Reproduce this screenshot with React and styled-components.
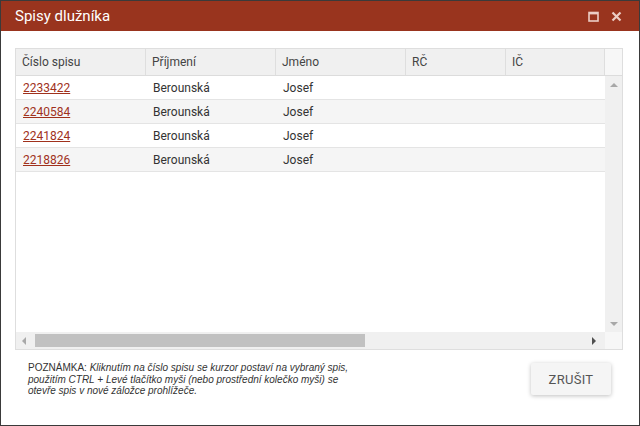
import React from 'react';
import styled, { createGlobalStyle } from 'styled-components';

const GlobalStyle = createGlobalStyle`
  html, body {
    margin: 0;
    padding: 0;
    background: #ffffff;
  }
  * {
    box-sizing: border-box;
  }
`;

const Window = styled.div`
  width: 640px;
  height: 426px;
  border: 1px solid #3a3a3a;
  display: flex;
  flex-direction: column;
  background: #fff;
  font-family: Roboto, "Liberation Sans", Arial, sans-serif;
`;

const TitleBar = styled.div`
  height: 30px;
  flex-shrink: 0;
  background: #99341e;
  display: flex;
  align-items: center;
  justify-content: space-between;
  padding: 0 17px 0 14px;
  color: #fff;
`;

const Title = styled.span`
  font-size: 15px;
`;

const TitleActions = styled.div`
  display: flex;
  align-items: center;
  gap: 12px;
`;

const Body = styled.div`
  flex: 1;
  display: flex;
  flex-direction: column;
  padding: 17px 16px 0 14px;
`;

const Grid = styled.div`
  height: 302px;
  border: 1px solid #dedede;
  display: flex;
  flex-direction: column;
`;

const HeaderRow = styled.div`
  display: flex;
  height: 27px;
  flex-shrink: 0;
  background: #f0f0f0;
  border-bottom: 1px solid #dcdcdc;
`;

const HeaderCell = styled.div`
  width: ${(p) => p.$w}px;
  flex-shrink: 0;
  border-right: 1px solid #dedede;
  padding-left: 6px;
  display: flex;
  align-items: center;
  font-size: 12px;
  color: #444;
`;

const ScrollCorner = styled.div`
  width: 17px;
  flex-shrink: 0;
  background: #f7f7f7;
`;

const Middle = styled.div`
  flex: 1;
  display: flex;
  min-height: 0;
`;

const Rows = styled.div`
  flex: 1;
  overflow: hidden;
`;

const Row = styled.div`
  display: flex;
  height: 24px;
  background: ${(p) => (p.$alt ? '#f5f5f5' : '#ffffff')};
  border-bottom: 1px solid #e4e4e4;
`;

const Cell = styled.div`
  width: ${(p) => p.$w}px;
  flex-shrink: 0;
  padding-left: 7px;
  display: flex;
  align-items: center;
  font-size: 12px;
  color: #333;
`;

const FileLink = styled.a`
  color: #a0311c;
  text-decoration: underline;
  cursor: pointer;
`;

const VScroll = styled.div`
  width: 17px;
  flex-shrink: 0;
  background: #f0f0f0;
  display: flex;
  flex-direction: column;
  justify-content: space-between;
  align-items: center;
  padding: 6px 0 5px;
`;

const HScrollRow = styled.div`
  height: 17px;
  flex-shrink: 0;
  display: flex;
`;

const HScroll = styled.div`
  flex: 1;
  background: #f0f0f0;
  display: flex;
  align-items: center;
  padding: 0 8px 0 5px;
`;

const Thumb = styled.div`
  width: 330px;
  height: 13px;
  background: #c1c1c1;
  margin-left: 8px;
`;

const Spacer = styled.div`
  flex: 1;
`;

const Footer = styled.div`
  display: flex;
  justify-content: space-between;
  align-items: flex-start;
  padding: 12px 12px 0 13px;
`;

const Note = styled.div`
  display: flex;
  flex-direction: column;
  font-family: "Liberation Sans", Arial, sans-serif;
  font-size: 10px;
  line-height: 11.5px;
  color: #333;
  white-space: nowrap;
`;

const Em = styled.span`
  font-style: italic;
`;

const Button = styled.button`
  width: 80px;
  height: 32px;
  margin-top: 1px;
  border: none;
  border-radius: 2px;
  background: #f5f5f5;
  box-shadow: 0 1px 4px rgba(0, 0, 0, 0.25);
  font-family: Roboto, "Liberation Sans", Arial, sans-serif;
  font-size: 13px;
  color: #555;
  letter-spacing: 0.3px;
`;

const Arrow = ({ dir, color }) => {
  const pts = {
    up: '0,5 4,1 8,5',
    down: '0,1 4,5 8,1',
    left: '5,0 1,4 5,8',
    right: '1,0 5,4 1,8',
  }[dir];
  const vertical = dir === 'up' || dir === 'down';
  return (
    <svg width={vertical ? 8 : 6} height={vertical ? 6 : 8} viewBox={vertical ? '0 0 8 6' : '0 0 6 8'}>
      <polygon points={pts} fill={color} />
    </svg>
  );
};

const columns = [
  { key: 'cislo', label: 'Číslo spisu', w: 130 },
  { key: 'prijmeni', label: 'Příjmení', w: 130 },
  { key: 'jmeno', label: 'Jméno', w: 130 },
  { key: 'rc', label: 'RČ', w: 100 },
  { key: 'ic', label: 'IČ', w: 99 },
];

const rows = [
  { cislo: '2233422', prijmeni: 'Berounská', jmeno: 'Josef' },
  { cislo: '2240584', prijmeni: 'Berounská', jmeno: 'Josef' },
  { cislo: '2241824', prijmeni: 'Berounská', jmeno: 'Josef' },
  { cislo: '2218826', prijmeni: 'Berounská', jmeno: 'Josef' },
];

export default function App() {
  return (
    <>
      <GlobalStyle />
      <Window>
        <TitleBar>
          <Title>Spisy dlužníka</Title>
          <TitleActions>
            <svg width="11" height="11" viewBox="0 0 11 11">
              <rect x="1" y="1.5" width="9" height="8.5" fill="none" stroke="#eccdc5" strokeWidth="1.6" />
              <rect x="1" y="1" width="9" height="2.4" fill="#eccdc5" />
            </svg>
            <svg width="11" height="11" viewBox="0 0 11 11">
              <path d="M1.5 1.5 L9.5 9.5 M9.5 1.5 L1.5 9.5" stroke="#eccdc5" strokeWidth="2.2" />
            </svg>
          </TitleActions>
        </TitleBar>
        <Body>
          <Grid>
            <HeaderRow>
              {columns.map((c) => (
                <HeaderCell key={c.key} $w={c.w}>{c.label}</HeaderCell>
              ))}
              <ScrollCorner />
            </HeaderRow>
            <Middle>
              <Rows>
                {rows.map((r, i) => (
                  <Row key={r.cislo} $alt={i % 2 === 1}>
                    {columns.map((c) => (
                      <Cell key={c.key} $w={c.w}>
                        {c.key === 'cislo' ? <FileLink>{r.cislo}</FileLink> : r[c.key]}
                      </Cell>
                    ))}
                  </Row>
                ))}
              </Rows>
              <VScroll>
                <Arrow dir="up" color="#a8a8a8" />
                <Arrow dir="down" color="#a8a8a8" />
              </VScroll>
            </Middle>
            <HScrollRow>
              <HScroll>
                <Arrow dir="left" color="#a8a8a8" />
                <Thumb />
                <Spacer />
                <Arrow dir="right" color="#505050" />
              </HScroll>
              <ScrollCorner />
            </HScrollRow>
          </Grid>
          <Footer>
            <Note>
              <span>POZNÁMKA: <Em>Kliknutím na číslo spisu se kurzor postaví na vybraný spis,</Em></span>
              <Em>použitím CTRL + Levé tlačítko myši (nebo prostřední kolečko myši) se</Em>
              <Em>otevře spis v nové záložce prohlížeče.</Em>
            </Note>
            <Button>ZRUŠIT</Button>
          </Footer>
        </Body>
      </Window>
    </>
  );
}
